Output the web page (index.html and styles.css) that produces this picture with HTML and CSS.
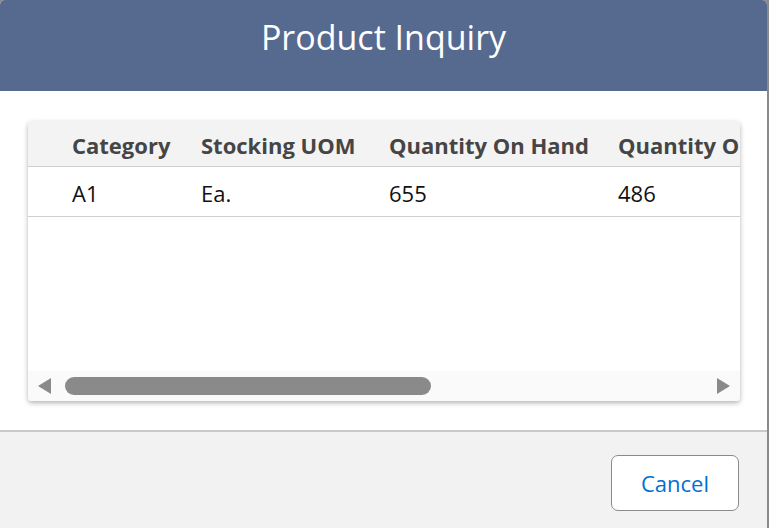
FILE: index.html
```html
<!DOCTYPE html>
<html lang="en">
<head>
  <meta charset="UTF-8" />
  <title>Product Inquiry</title>
  <link rel="stylesheet" href="styles.css">
</head>
<body>
  <div class="modal">
    <header class="modal-header">
      <h1>Product Inquiry</h1>
    </header>

    <div class="modal-body">
      <div class="grid-card">
        <div class="grid-scroll">
          <table class="grid">
            <colgroup>
              <col class="col-cat">
              <col class="col-uom">
              <col class="col-qoh">
              <col class="col-qoo">
            </colgroup>
            <thead>
              <tr>
                <th>Category</th>
                <th>Stocking UOM</th>
                <th>Quantity On Hand</th>
                <th>Quantity On Order</th>
              </tr>
            </thead>
            <tbody>
              <tr>
                <td>A1</td>
                <td>Ea.</td>
                <td>655</td>
                <td>486</td>
              </tr>
            </tbody>
          </table>
        </div>
        <div class="hscroll">
          <span class="arrow arrow-left"></span>
          <div class="track"><div class="thumb"></div></div>
          <span class="arrow arrow-right"></span>
        </div>
      </div>
    </div>

    <footer class="modal-footer">
      <button class="btn-cancel">Cancel</button>
    </footer>
  </div>
</body>
</html>
```

FILE: styles.css
```css
html, body {
  margin: 0;
  height: 100%;
}

body {
  font-family: "Open Sans", "Noto Sans", sans-serif;
  background: #8a8a8a;
  overflow: hidden;
}

.modal {
  width: 767px;
  height: 528px;
  display: flex;
  flex-direction: column;
  background: #fff;
  border-radius: 5px 5px 0 0;
  overflow: hidden;
}

.modal-header {
  height: 91px;
  background: #556a8e;
  color: #fff;
  text-align: center;
}

.modal-header h1 {
  margin: 0;
  padding-top: 12px;
  font-size: 34px;
  font-weight: 400;
  line-height: 50px;
}

.modal-body {
  flex: 1;
  padding: 30px 27px 0 28px;
  border-bottom: 2px solid #c9c9c9;
}

.grid-card {
  height: 280px;
  display: flex;
  flex-direction: column;
  border-radius: 4px;
  background: #fff;
  box-shadow: 0 2px 5px rgba(0, 0, 0, 0.3);
  overflow: hidden;
}

.grid-scroll {
  flex: 1;
  overflow: hidden;
}

.grid {
  border-collapse: collapse;
  table-layout: fixed;
  width: 900px;
  font-size: 22px;
}

.col-cat { width: 173px; }
.col-uom { width: 188px; }
.col-qoh { width: 229px; }
.col-qoo { width: 310px; }

.grid th {
  height: 42px;
  padding: 3px 0 0;
  text-align: left;
  font-weight: 700;
  color: #454545;
  background: #f3f3f3;
  border-bottom: 1px solid #cfcfcf;
  white-space: nowrap;
}

.grid td {
  height: 46px;
  padding: 3px 0 0;
  color: #111;
  border-bottom: 1px solid #cfcfcf;
}

.grid th:first-child,
.grid td:first-child {
  padding-left: 44px;
}

.hscroll {
  height: 30px;
  display: flex;
  align-items: center;
  background: #fafafa;
}

.arrow {
  width: 0;
  height: 0;
  border-top: 8px solid transparent;
  border-bottom: 8px solid transparent;
}

.arrow-left {
  margin-left: 10px;
  border-right: 13px solid #8a8a8a;
}

.arrow-right {
  margin-right: 10px;
  border-left: 13px solid #8a8a8a;
}

.track {
  flex: 1;
  margin: 0 14px;
}

.thumb {
  width: 366px;
  height: 18px;
  border-radius: 9px;
  background: #8a8a8a;
}

.modal-footer {
  height: 96px;
  background: #f2f2f2;
  display: flex;
  justify-content: flex-end;
  align-items: flex-start;
  padding-right: 28px;
}

.btn-cancel {
  margin-top: 23px;
  width: 128px;
  height: 56px;
  background: #fff;
  border: 1px solid #8a8a8a;
  border-radius: 7px;
  color: #0070d2;
  font-family: inherit;
  font-size: 22px;
}
```
